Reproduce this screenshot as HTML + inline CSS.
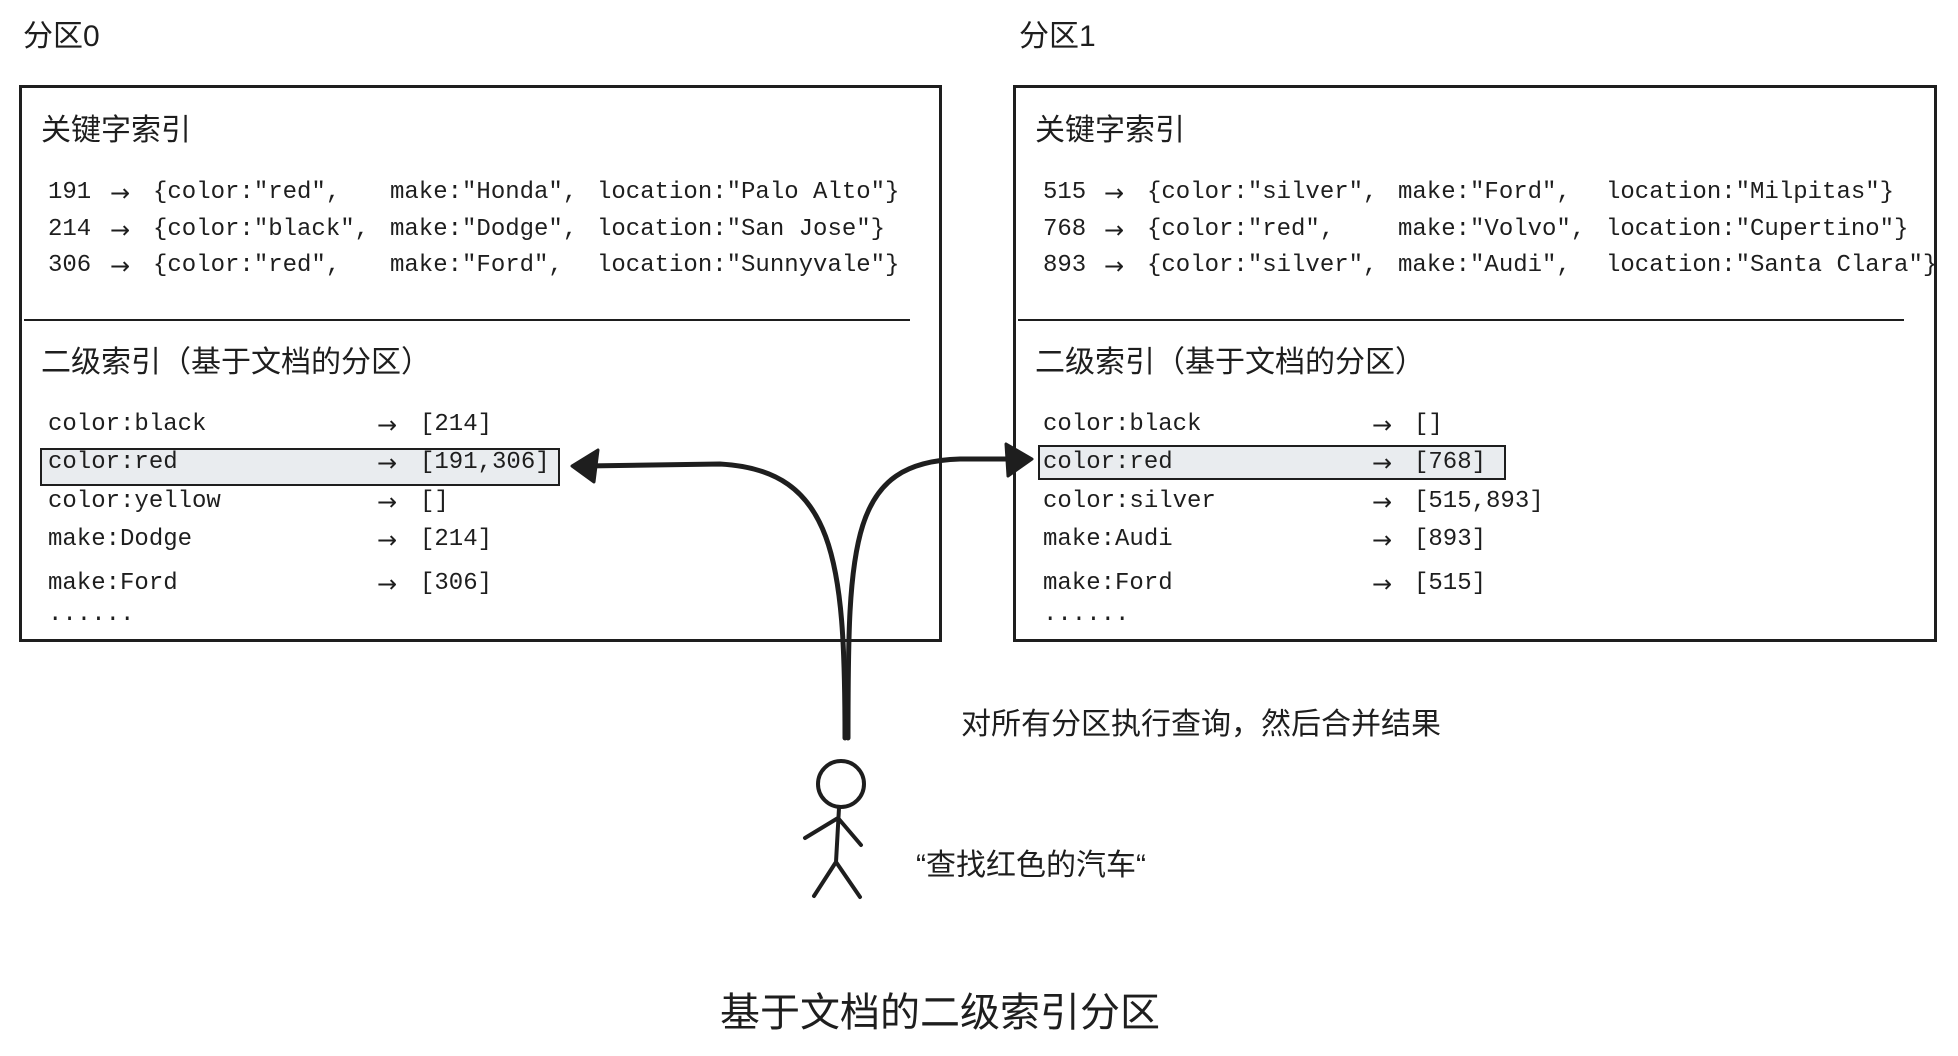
<!DOCTYPE html>
<html><head><meta charset="utf-8"><style>
body{margin:0;width:1958px;height:1056px;background:#fff;position:relative;overflow:hidden;color:#1e1e1e;font-family:"Liberation Sans","Noto Sans CJK SC",sans-serif}
.a{position:absolute;white-space:pre;line-height:1}
.m{font-family:"Liberation Mono","DejaVu Sans Mono",monospace;font-size:24px}
.r{font-family:"DejaVu Sans",sans-serif;font-size:24px}
.c{font-size:30px}
.box{position:absolute;border:3px solid #1e1e1e;box-sizing:border-box}
.hl{position:absolute;background:#e9ecef;border:2px solid #1e1e1e;box-sizing:border-box}
.ln{position:absolute;height:2px;background:#1e1e1e}
</style></head><body>
<div class="a c" style="left:23px;top:22px">分区0</div>
<div class="a c" style="left:1019px;top:22px">分区1</div>

<div class="box" style="left:19px;top:85px;width:923px;height:557px"></div>
<div class="box" style="left:1013px;top:85px;width:924px;height:557px"></div>
<div class="ln" style="left:24px;top:319px;width:886px"></div>
<div class="ln" style="left:1018px;top:319px;width:886px"></div>
<div class="hl" style="left:40px;top:448px;width:520px;height:38px"></div>
<div class="hl" style="left:1038px;top:445px;width:468px;height:35px"></div>

<div class="a c" style="left:41px;top:116px">关键字索引</div>
<div class="a c" style="left:1035px;top:116px">关键字索引</div>
<div class="a c" style="left:41px;top:348px">二级索引（基于文档的分区）</div>
<div class="a c" style="left:1035px;top:348px">二级索引（基于文档的分区）</div>

<div class="a m" style="left:48px;top:181px">191</div><div class="a r" style="left:110px;top:181px">→</div><div class="a m" style="left:153px;top:181px">{color:"red",</div><div class="a m" style="left:390px;top:181px">make:"Honda",</div><div class="a m" style="left:597px;top:181px">location:"Palo Alto"}</div>
<div class="a m" style="left:48px;top:218px">214</div><div class="a r" style="left:110px;top:218px">→</div><div class="a m" style="left:153px;top:218px">{color:"black",</div><div class="a m" style="left:390px;top:218px">make:"Dodge",</div><div class="a m" style="left:597px;top:218px">location:"San Jose"}</div>
<div class="a m" style="left:48px;top:254px">306</div><div class="a r" style="left:110px;top:254px">→</div><div class="a m" style="left:153px;top:254px">{color:"red",</div><div class="a m" style="left:390px;top:254px">make:"Ford",</div><div class="a m" style="left:597px;top:254px">location:"Sunnyvale"}</div>

<div class="a m" style="left:1043px;top:181px">515</div><div class="a r" style="left:1104px;top:181px">→</div><div class="a m" style="left:1147px;top:181px">{color:"silver",</div><div class="a m" style="left:1398px;top:181px">make:"Ford",</div><div class="a m" style="left:1606px;top:181px">location:"Milpitas"}</div>
<div class="a m" style="left:1043px;top:218px">768</div><div class="a r" style="left:1104px;top:218px">→</div><div class="a m" style="left:1147px;top:218px">{color:"red",</div><div class="a m" style="left:1398px;top:218px">make:"Volvo",</div><div class="a m" style="left:1606px;top:218px">location:"Cupertino"}</div>
<div class="a m" style="left:1043px;top:254px">893</div><div class="a r" style="left:1104px;top:254px">→</div><div class="a m" style="left:1147px;top:254px">{color:"silver",</div><div class="a m" style="left:1398px;top:254px">make:"Audi",</div><div class="a m" style="left:1606px;top:254px">location:"Santa Clara"}</div>

<div class="a m" style="left:48px;top:413px">color:black</div><div class="a r" style="left:377px;top:413px">→</div><div class="a m" style="left:420px;top:413px">[214]</div>
<div class="a m" style="left:48px;top:451px">color:red</div><div class="a r" style="left:377px;top:451px">→</div><div class="a m" style="left:420px;top:451px">[191,306]</div>
<div class="a m" style="left:48px;top:490px">color:yellow</div><div class="a r" style="left:377px;top:490px">→</div><div class="a m" style="left:420px;top:490px">[]</div>
<div class="a m" style="left:48px;top:528px">make:Dodge</div><div class="a r" style="left:377px;top:528px">→</div><div class="a m" style="left:420px;top:528px">[214]</div>
<div class="a m" style="left:48px;top:572px">make:Ford</div><div class="a r" style="left:377px;top:572px">→</div><div class="a m" style="left:420px;top:572px">[306]</div>
<div class="a m" style="left:48px;top:603px">......</div>

<div class="a m" style="left:1043px;top:413px">color:black</div><div class="a r" style="left:1372px;top:413px">→</div><div class="a m" style="left:1414px;top:413px">[]</div>
<div class="a m" style="left:1043px;top:451px">color:red</div><div class="a r" style="left:1372px;top:451px">→</div><div class="a m" style="left:1414px;top:451px">[768]</div>
<div class="a m" style="left:1043px;top:490px">color:silver</div><div class="a r" style="left:1372px;top:490px">→</div><div class="a m" style="left:1414px;top:490px">[515,893]</div>
<div class="a m" style="left:1043px;top:528px">make:Audi</div><div class="a r" style="left:1372px;top:528px">→</div><div class="a m" style="left:1414px;top:528px">[893]</div>
<div class="a m" style="left:1043px;top:572px">make:Ford</div><div class="a r" style="left:1372px;top:572px">→</div><div class="a m" style="left:1414px;top:572px">[515]</div>
<div class="a m" style="left:1043px;top:603px">......</div>

<svg width="1958" height="1056" style="position:absolute;left:0;top:0" fill="none" stroke="#1e1e1e" stroke-linecap="round" stroke-linejoin="round">
<path d="M845 738 C845 560 835 470 720 464 L585 466" stroke-width="5"/>
<path d="M572 466 L598 450 L594 482 Z" fill="#1e1e1e" stroke-width="3"/>
<path d="M848 738 C848 540 850 462 960 459 L1012 459" stroke-width="5"/>
<path d="M1032 459 L1006 444 L1008 476 Z" fill="#1e1e1e" stroke-width="3"/>
<circle cx="841" cy="784" r="23" stroke-width="4"/>
<path d="M839 808 L836 862 M805 838 L838 818 L861 845 M836 862 L814 896 M836 862 L860 897" stroke-width="4"/>
</svg>

<div class="a c" style="left:961px;top:710px">对所有分区执行查询，然后合并结果</div>
<div class="a c" style="left:916px;top:851px">“查找红色的汽车“</div>
<div class="a" style="left:720px;top:993px;font-size:40px">基于文档的二级索引分区</div>
</body></html>
